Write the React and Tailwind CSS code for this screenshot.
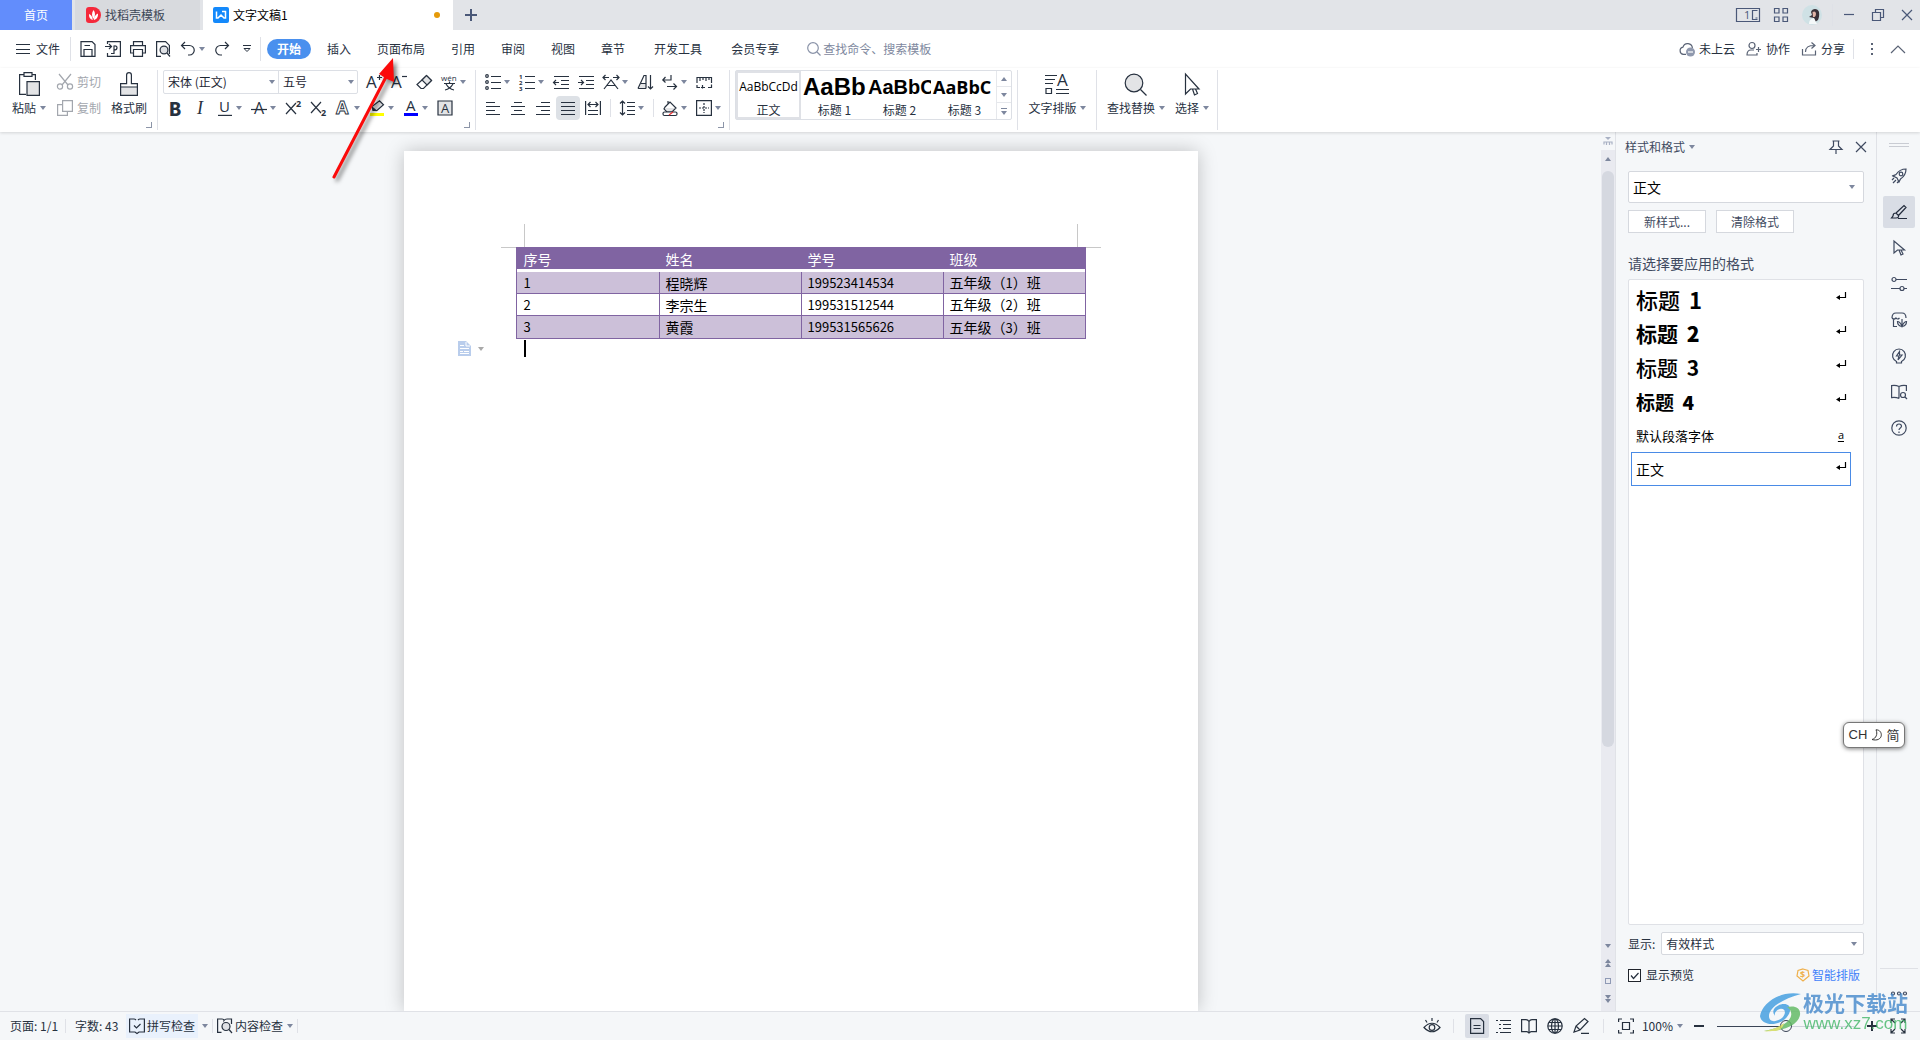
import React, { useState } from 'react';
import clsx from 'clsx';

const students = [
  { id: '1', name: '程晓辉', number: '199523414534', grade: '1' },
  { id: '2', name: '李宗生', number: '199531512544', grade: '2' },
  { id: '3', name: '黄霞', number: '199531565626', grade: '3' },
];

const styleList = [
  { name: '标题', level: '1', className: 'text-[22px] font-medium' },
  { name: '标题', level: '2', className: 'text-[21px] font-bold' },
  { name: '标题', level: '3', className: 'text-[21px] font-medium' },
  { name: '标题', level: '4', className: 'text-[19px] font-bold' },
  { name: '默认段落字体', className: 'text-[13px]', char: true },
  { name: '正文', className: 'text-[14px]', active: true },
];

const gallery = [
  { name: '正文', sample: 'AaBbCcDd', className: "font-['Open_Sans'] text-[12px]", active: true },
  { name: '标题 1', sample: 'AaBb', className: "font-['Liberation_Sans'] text-[24px] font-bold" },
  { name: '标题 2', sample: 'AaBbC', className: "font-['Liberation_Sans'] text-[20px] font-bold" },
  { name: '标题 3', sample: 'AaBbC', className: "font-['Open_Sans'] text-[18px] font-bold" },
];

function Svg({ w = 16, h = 16, children, className, sw = 1.2 }) {
  return (
    <svg width={w} height={h} viewBox={`0 0 ${w} ${h}`} fill="none" stroke="currentColor" strokeWidth={sw} className={clsx('shrink-0 overflow-visible', className)} aria-hidden="true">
      {children}
    </svg>
  );
}

// letter used inside a toolbar icon
function Glyph({ x, y, size, children, bold, fill = 'currentColor' }) {
  return (
    <text x={x} y={y} fontSize={size} fill={fill} stroke="none" fontWeight={bold ? 700 : 400} fontFamily="Open Sans, sans-serif">
      {children}
    </text>
  );
}

function Caret({ className }) {
  return (
    <svg width="6" height="4" viewBox="0 0 6 4" className={clsx('shrink-0 text-[#7d879e]', className)} aria-hidden="true">
      <path d="M0 0h6L3 4z" fill="currentColor" />
    </svg>
  );
}

function Divider({ className }) {
  return <span className={clsx('w-px shrink-0 bg-[#dfe1e7]', className)} />;
}

// toolbar button, optionally with a drop-down arrow
function Tool({ label, children, caret, active }) {
  return (
    <button aria-label={label} className={clsx('flex h-6 shrink-0 items-center gap-[3px]', caret ? 'w-[34px]' : 'w-[25px]')}>
      <span className={clsx('flex h-6 shrink-0 items-center justify-center', active ? '-mx-1 w-6 rounded-sm bg-[#dde1e6]' : 'w-4')}>{children}</span>
      {caret && <Caret />}
    </button>
  );
}

function Corner() {
  return <span className="absolute right-[5px] bottom-1 size-[6px] border-r border-b border-[#8c95a8]" />;
}

function Select({ label, value, className, caretClass = 'right-2' }) {
  return (
    <span className={clsx('relative flex items-center', className)}>
      <select aria-label={label} defaultValue={value} className="h-full w-full appearance-none bg-transparent pl-1 outline-none">
        <option>{value}</option>
      </select>
      <Caret className={clsx('pointer-events-none absolute', caretClass)} />
    </span>
  );
}

function TitleBar() {
  return (
    <header className="flex h-[30px] shrink-0 bg-[#e2e4e8] text-[12px]">
      <button className="w-[72px] bg-[#628dfc] text-white">首页</button>
      <button className="ml-[3px] flex w-[125px] items-center gap-1 bg-[#d8dade] pl-[11px] text-[#3d4757]">
        <svg width="15" height="16" viewBox="0 0 15 16">
          <path d="M0 3Q0 0 3 0h4a8 8 0 0 1 0 16H3q-3 0-3-3z" fill="#f5293b" />
          <path d="M7.500 3c2 2.500 2 5.500 0 9-2-3-2-6 0-9zM3 7c2 .5 3.500 2.500 3.800 6C4 12.500 2.800 10 3 7zm9-.5c.3 3.500-1.500 6-4.200 6.500C8 10 9.500 7.500 12 6.500z" fill="#fff" />
        </svg>
        找稻壳模板
      </button>
      <div className="ml-[3px] flex w-[250px] items-center gap-1 bg-white pr-[13px] pl-[10px] text-black">
        <svg width="16" height="16" viewBox="0 0 16 16">
          <rect width="16" height="16" rx="2" fill="#1489fb" />
          <path d="M3.500 4.500v6.500h1.500L8 8l3 3h1.500V4.500H9" fill="none" stroke="#fff" strokeWidth="1.500" />
        </svg>
        <span className="flex-1">文字文稿1</span>
        <span className="size-[6px] rounded-full bg-[#e59a09]" />
      </div>
      <button aria-label="新建" className="ml-3 text-[#4a5878]">
        <Svg w={12} h={12} sw={2}><path d="M6 0v12M0 6h12" /></Svg>
      </button>
      <div className="ml-auto flex items-center gap-[14px] text-[#4a5878]">
        <button aria-label="窗口">
          <Svg w={24} h={14}>
            <path d="M.5.500h23v13H.5zM21.500 2.500h-5v9h5M19.500 10h2" />
            <Glyph x={8} y={11} size={11}>1</Glyph>
          </Svg>
        </button>
        <button aria-label="应用">
          <Svg w={14} h={14}><path d="M.5.500h4.500v4.500H.5zM9 .500h4.500v4.500H9zM.5 9h4.500v4.500H.5zM9 9h4.500v4.500H9z" /></Svg>
        </button>
        <svg width="20" height="20" viewBox="0 0 20 20" aria-hidden="true">
          <circle cx="10" cy="10" r="10" fill="#cfe1e5" />
          <path d="M9 7c1-4 7-4 8 0 .5 3 0 6-1 8l-3 2-1-4-5-1 3-2z" fill="#3a3138" />
          <path d="M10.500 7q3-1.500 3.500 1.500c0 3-1.500 4-3 3.500z" fill="#e3b5a8" />
          <path d="M7 19c0-4 2-5 5-6l3 6z" fill="#f4f8f9" />
        </svg>
      </div>
      <Divider className="mx-[10px] my-1 bg-[#c9ccd3]" />
      <div className="flex items-center gap-[17px] pr-[7px] text-[#4a5878]">
        <button aria-label="最小化"><Svg w={12} h={12}><path d="M1 5.500h10" /></Svg></button>
        <button aria-label="还原"><Svg w={12} h={12}><path d="M.5 3.500h8v8h-8zM3.500 3V.500h8v8H9" /></Svg></button>
        <button aria-label="关闭"><Svg w={12} h={12}><path d="m1 1 10 10M11 1 1 11" /></Svg></button>
      </div>
    </header>
  );
}

function MenuBar() {
  return (
    <div className="flex h-[38px] shrink-0 items-center bg-white text-[12px] text-[#27313f]">
      <button className="ml-4 flex items-center gap-[6px]">
        <Svg w={14} h={12} sw={1}><path d="M0 1.500h14M0 6.500h14M0 10.500h14" /></Svg>
        文件
      </button>
      <Divider className="mr-[9px] ml-[10px] h-6" />
      <Tool label="保存"><Svg><path d="M1 .6h11l3 3v11.800H1zM4 15V8.500h8V15M4.500 4.500H10" /></Svg></Tool>
      <Tool label="输出为PDF"><Svg><path d="M2.500 3V.6h12.900v14.800H2.500V12M0 5.500h6M4 3l2.500 2.500L4 8M6 12.500h3V5c4-1 4 4 0 4" /></Svg></Tool>
      <Tool label="打印"><Svg><path d="M3.500 4V.6h9V4M3.500 12H.6V4.600h14.800V12h-2.900M3.500 8.500h9v6.900h-9z" /></Svg></Tool>
      <Tool label="打印预览"><Svg><path d="M6 15.400H1.600V.6h9l3.800 3.800V13" /><circle cx="9" cy="9" r="3.900" fill="#dfe1e5" /><path d="m12 12 3 3.500" /></Svg></Tool>
      <Tool label="撤销" caret><Svg><path d="M5 1 1.500 4.500 5 8M2 4.500h7.500a4.500 4.500 0 0 1 0 9.500H8" /></Svg></Tool>
      <Tool label="恢复"><Svg><path d="m11 1 3.500 3.500L11 8M14 4.500H6.500a4.500 4.500 0 0 0 0 9.500H8" /></Svg></Tool>
      <button aria-label="自定义" className="flex w-4 justify-center"><Svg w={8} h={8} sw={1}><path d="M0 .5h8M1 3.500h6L4 6.500z" /></Svg></button>
      <Divider className="mr-[6px] ml-[5px] h-6" />
      <button className="h-5 w-11 rounded-full bg-[#4a90ee] font-bold text-white">开始</button>
      <nav className="ml-4 flex gap-[26px]">
        {['插入', '页面布局', '引用', '审阅', '视图', '章节'].map(item => <button key={item}>{item}</button>)}
      </nav>
      <nav className="ml-[29px] flex gap-[29px]">
        {['开发工具', '会员专享'].map(item => <button key={item}>{item}</button>)}
      </nav>
      <label className="ml-7 flex items-center gap-[2px] text-[#8a93a8]">
        <Svg w={14} h={14}><circle cx="6" cy="6" r="5.300" /><path d="m10 10 3.500 3.500" /></Svg>
        <input aria-label="搜索" placeholder="查找命令、搜索模板" className="w-[120px] outline-none placeholder:text-[#7e889e]" />
      </label>
      <div className="ml-auto flex items-center gap-[11px]">
        <button className="flex items-center gap-1">
          <Svg className="text-[#5a6375]"><path d="M7 13.400H4.500a3.700 3.700 0 0 1-.5-7.300 4.800 4.800 0 0 1 9.400 1" /><circle cx="11.500" cy="11" r="4.500" fill="#9099ae" stroke="none" /><path d="M9 11h5" stroke="#fff" /></Svg>
          未上云
        </button>
        <button className="flex items-center gap-1">
          <Svg className="text-[#5a6375]"><circle cx="6" cy="4.500" r="3" /><path d="M8 9H5Q1 9 1 14h10v-2M10 8.500h5M12.500 6v5" /></Svg>
          协作
        </button>
        <button className="flex items-center gap-1">
          <Svg className="text-[#5a6375]"><path d="M1.500 8v6h13V9.500M4.500 11c0-5 3-6.500 9-6.500M10.500 1.500l3.500 3-3.500 3" /></Svg>
          分享
        </button>
      </div>
      <Divider className="mx-2 h-5" />
      <button aria-label="更多" className="mx-2 text-[#5a6375]"><Svg w={4} h={14}><path d="M1 2h2M1 7h2M1 12h2" strokeWidth="2" /></Svg></button>
      <button aria-label="收起" className="mr-[14px] ml-2 text-[#5a6375]"><Svg w={16} h={10}><path d="m1 9 7-7 7 7" /></Svg></button>
    </div>
  );
}

function Ribbon() {
  return (
    <div className="relative z-10 flex h-16 shrink-0 bg-white text-[12px] text-[#27313f] shadow-[0_1px_3px_rgba(0,0,0,0.14)]">
      <section className="relative flex w-[157px]">
        <button className="mt-1 ml-3 flex flex-col items-center gap-[3px]">
          <Svg w={22} h={24}>
            <path d="M6 2.600H1.600v19.800H8M14 2.600h3.400V8" /><path d="M6 .6h8v3.800H6z" /><path d="M9 9.600h12.400v13.800H9z" fill="#e3e4e6" />
          </Svg>
          <span className="flex items-center gap-1 leading-[18px]">粘贴<Caret /></span>
        </button>
        <div className="mt-px ml-[11px] flex flex-col text-[#a3a7ae]">
          <button className="flex h-[26px] items-center gap-1">
            <Svg><path d="m2 0 9 11M14 0 5 11" /><circle cx="3" cy="12.500" r="2.600" /><circle cx="13" cy="12.500" r="2.600" /></Svg>剪切
          </button>
          <button className="flex h-[26px] items-center gap-1">
            <Svg><path d="M5.600.6h9.800v10.800H5.600zM5 4.600H.6v10.800h9.800V12" /></Svg>复制
          </button>
        </div>
        <button className="mt-1 ml-[10px] flex flex-col items-center gap-[3px]">
          <Svg w={20} h={24}>
            <path d="M1.600 15h16.800v8.400H1.600z" fill="#e3e4e6" /><path d="M1.600 15v-3.400H7.600V3q0-2.400 2.400-2.400T12.400 3v8.600h6V15" />
          </Svg>
          <span className="leading-[18px]">格式刷</span>
        </button>
        <Corner />
      </section>
      <Divider className="my-[2px]" />

      <section className="relative w-[317px] pt-px pl-[5px]">
        <div className="flex h-[26px] items-center">
          <div className="mr-2 flex h-6 rounded-xs border border-[#dcdfe5] text-[#1d2633]">
            <Select label="字体" value="宋体 (正文)" className="w-[115px] border-r border-[#dcdfe5]" caretClass="right-[3px]" />
            <Select label="字号" value="五号" className="w-[78px]" caretClass="right-[3px]" />
          </div>
          <Tool label="增大字号"><Svg><path d="M11 3.500h5M13.500 1v5" /><Glyph x={0} y={14} size={17}>A</Glyph></Svg></Tool>
          <Tool label="减小字号"><Svg><path d="M11 2.500h5" /><Glyph x={0} y={14} size={17}>A</Glyph></Svg></Tool>
          <Tool label="清除格式"><Svg><path d="m6 6 4.500-4.500 5 5-8 8H5l-4-4z" /><path d="m6 6 4.500-4.500 5 5L11 11z" fill="#e3e4e6" /></Svg></Tool>
          <Tool label="拼音指南" caret>
            <Svg><Glyph x={0} y={7} size={8}>wén</Glyph><path d="M3 9.500h11M8.500 7.500v2M5 10q3 5 8 6M12 10q-3 5-8 6" /></Svg>
          </Tool>
        </div>
        <div className="flex h-[26px] items-center pl-1">
          <Tool label="加粗"><b className="text-[18px] leading-none font-black">B</b></Tool>
          <Tool label="倾斜"><i className="font-['Liberation_Serif'] text-[18px] leading-none">I</i></Tool>
          <Tool label="下划线" caret><Svg><Glyph x={2} y={12} size={15}>U</Glyph><path d="M1 15.400h14" /></Svg></Tool>
          <Tool label="删除线" caret><Svg><Glyph x={3} y={14} size={16}>A</Glyph><path d="M0 9.500h16" /></Svg></Tool>
          <Tool label="上标"><Svg><path d="m1 3 10 11M11 3 1 14" /><Glyph x={11} y={7} size={9} bold>2</Glyph></Svg></Tool>
          <Tool label="下标"><Svg><path d="m1 2 10 11M11 2 1 13" /><Glyph x={11} y={16} size={9} bold>2</Glyph></Svg></Tool>
          <Tool label="文字效果" caret>
            <Svg><text x="1" y="14" fontSize="18" fontWeight="700" fontFamily="Open Sans" fill="#fff" stroke="#27313f" strokeWidth="0.900">A</text></Svg>
          </Tool>
          <Tool label="突出显示" caret>
            <Svg><path d="M1 13h14v3H1z" fill="#ff0" stroke="none" /><path d="M4 10.500 3 6.500 10.500.8l4 4L8 10.500zM3.500 7.500l4 3.500" fill="#e3e4e6" /></Svg>
          </Tool>
          <Tool label="字体颜色" caret>
            <Svg><path d="M1 13h14v3H1z" fill="#00f" stroke="none" /><Glyph x={3} y={11} size={15}>A</Glyph></Svg>
          </Tool>
          <Tool label="字符底纹"><Svg><path d="M1 1h14v14H1z" fill="#e3e4e6" /><Glyph x={4} y={13} size={13}>A</Glyph></Svg></Tool>
        </div>
        <Corner />
      </section>
      <Divider className="my-[2px]" />

      <section className="relative w-[253px] pt-px pl-[9px]">
        <div className="flex h-[26px] items-center">
          <Tool label="项目符号" caret><Svg><circle cx="2" cy="2" r="1.300" /><circle cx="2" cy="8" r="1.300" /><circle cx="2" cy="14" r="1.300" /><path d="M6 2.500h10M6 8.500h10M6 14.500h10" /></Svg></Tool>
          <Tool label="编号" caret>
            <Svg><Glyph x={0} y={5} size={6} bold>1</Glyph><Glyph x={0} y={11} size={6} bold>2</Glyph><Glyph x={0} y={17} size={6} bold>3</Glyph><path d="M6 2.500h10M6 8.500h10M6 14.500h10" /></Svg>
          </Tool>
          <Tool label="减少缩进"><Svg><path d="M1 2.500h15M8 6.500h8M8 10.500h8M1 14.500h15M6 8.500H.5M3 6 .5 8.500 3 11" /></Svg></Tool>
          <Tool label="增加缩进"><Svg><path d="M1 2.500h15M8 6.500h8M8 10.500h8M1 14.500h15M0 8.500h5.500M3 6l2.500 2.500L3 11" /></Svg></Tool>
          <Tool label="中文版式" caret><Svg><path d="m1 15 7-9 7 9M4 11.500h8M0 3.500h6M2.500 1 0 3.500 2.500 6M16 3.500h-6M13.500 1 16 3.500 13.500 6" /></Svg></Tool>
          <Tool label="排序"><Svg><path d="M4 10h5v4H2.500z" fill="#e3e4e6" stroke="none" /><path d="M1 14.500 7 1.500h2v13M4 9.500h5M1 14.500h8M13.500 1v14M11 12.500l2.500 2.500 2.500-2.500" /></Svg></Tool>
          <Tool label="显示段落标记" caret><Svg><path d="M9 1v5H.8M3.500 3 .8 6l2.700 2.500M5 12.500h9M11.500 9.500l3 3-3 3" /></Svg></Tool>
          <Tool label="制表位"><Svg><path d="M1 9V3.500h14.500V9M4 3.500V7M7 3.500V6M10 3.500V7M13 3.500V6M1 13.500h3M1 11v3M6.500 11v3.500M5 13.500h4M12 13.500h3.500v-3" /></Svg></Tool>
        </div>
        <div className="flex h-[26px] items-center">
          <Tool label="左对齐"><Svg><path d="M1 2.500h9M1 6.500h14M1 10.500h9M1 14.500h14" /></Svg></Tool>
          <Tool label="居中"><Svg><path d="M4 2.500h8M1 6.500h14M4 10.500h8M1 14.500h14" /></Svg></Tool>
          <Tool label="右对齐"><Svg><path d="M6 2.500h9M1 6.500h14M6 10.500h9M1 14.500h14" /></Svg></Tool>
          <Tool label="两端对齐" active><Svg><path d="M1 2.500h14M1 6.500h14M1 10.500h14M1 14.500h14" /></Svg></Tool>
          <Tool label="分散对齐"><Svg><path d="M.6 1v14M15.400 1v14M3 10.500h10M3 14.500h10M3 4.500h10M5.500 2 3 4.500 5.500 7M10.500 2 13 4.500 10.500 7" /></Svg></Tool>
          <Divider className="mr-2 h-[18px]" />
          <Tool label="行距" caret><Svg><path d="M3.500 1v14M1 3.500 3.500 1 6 3.500M1 12.500 3.500 15 6 12.500M8 2.500h8M8 6.500h8M8 10.500h8M8 14.500h8" /></Svg></Tool>
          <Divider className="mr-2 h-[18px]" />
          <Tool label="底纹颜色" caret>
            <Svg><path d="M3 8h11l-4 4H6z" fill="#e3e4e6" stroke="none" /><path d="m3 7 5-5 6 6-4 4H5L2 9zM6 4V1" /><rect x="1" y="12" width="14" height="3.500" rx="1.500" fill="#fff" /><path d="m7 15 4-3" stroke="#e33" /></Svg>
          </Tool>
          <Tool label="边框" caret><Svg><path d="M.6.600h14.800v14.800H.6z" /><path d="M8 3v10M3 8h10" strokeDasharray="2 1" /></Svg></Tool>
        </div>
        <Corner />
      </section>
      <Divider className="my-[2px]" />

      <section className="px-[5px] pt-[2px]">
        <div className="flex h-[50px] rounded-xs border border-[#dcdfe5]">
          {gallery.map(style => (
            <button key={style.name} className={clsx('flex w-[65px] flex-col items-center overflow-hidden', style.active ? 'ring-2 ring-[#dfe1e6] ring-inset' : 'pl-[2px]')}>
              <span className={clsx('flex h-[31px] items-center leading-none text-black', style.active ? 'justify-center' : 'w-full', style.className)}>{style.sample}</span>
              <span className="leading-4">{style.name}</span>
            </button>
          ))}
          <div className="flex w-[15px] flex-col border-l border-[#e6e8ec]">
            <button aria-label="上一行" className="flex h-4 items-center justify-center border-b border-[#e6e8ec]"><Caret className="rotate-180" /></button>
            <button aria-label="下一行" className="flex h-4 items-center justify-center border-b border-[#e6e8ec]"><Caret /></button>
            <button aria-label="更多样式" className="flex h-4 flex-col items-center justify-center gap-[2px]"><span className="h-px w-[6px] bg-[#7d879e]" /><Caret /></button>
          </div>
        </div>
      </section>
      <Divider className="my-[2px]" />
      <button className="mt-1 flex w-[78px] flex-col items-center gap-[3px]">
        <Svg w={24} h={24}><path d="M0 3.500h12M0 7.500h10M0 11.500h8M1 16.500h5.500v5H1zM11 17.500h13M11 21.500h13" /><Glyph x={12} y={14} size={17}>A</Glyph></Svg>
        <span className="flex items-center gap-[3px] leading-[18px]">文字排版<Caret /></span>
      </button>
      <Divider className="my-[2px]" />
      <button className="mt-1 ml-[10px] flex flex-col items-center gap-[3px]">
        <Svg w={24} h={24}><circle cx="10" cy="11" r="8.800" fill="#e3e4e6" /><path d="m16.500 17.500 6 6" /></Svg>
        <span className="flex items-center gap-1 leading-[18px]">查找替换<Caret /></span>
      </button>
      <button className="mt-1 ml-[10px] flex flex-col items-center gap-[3px]">
        <Svg w={16} h={24}><path d="M1.500 2v20l5-5h8.500zM8.500 17l2 6 3-1.500-2-4.500" /></Svg>
        <span className="flex items-center gap-1 leading-[18px]">选择<Caret /></span>
      </button>
      <Divider className="my-[2px] ml-2" />
    </div>
  );
}

function Document() {
  return (
    <main className="min-w-0 flex-1 overflow-hidden bg-[#f5f7f9] pt-[19px]">
      <article className="mx-auto h-full w-[794px] bg-white pt-[73px] text-[14px] text-black shadow-[0_0_18px_rgba(0,0,0,0.22)]">
        <div className="mx-[97px] -mb-px flex h-6 justify-between">
          <span className="w-6 border-r border-b border-[#c8c8c8]" />
          <span className="w-6 border-b border-l border-[#c8c8c8]" />
        </div>
        <div className="relative mx-[112px]">
          <table className="w-full table-fixed border-separate border-spacing-0 border border-[#8064a2] text-left leading-[18px]">
            <thead>
              <tr>
                {['序号', '姓名', '学号', '班级'].map(title => (
                  <th key={title} className="h-6 border-b-[3px] border-white bg-[#8064a2] p-0 pl-[7px] font-normal text-white">{title}</th>
                ))}
              </tr>
            </thead>
            <tbody className="[&_td]:h-[22px] [&_td]:border-[#8064a2] [&_td]:p-0 [&_td]:pl-[7px] [&_td+td]:border-l [&_td+td]:pl-[6px] [&_tr:not(:last-child)_td]:border-b [&_tr:nth-child(odd)]:bg-[#ccc0d9]">
              {students.map(student => (
                <tr key={student.id}>
                  <td className="text-[13px]">{student.id}</td>
                  <td>{student.name}</td>
                  <td className="text-[13px]">{student.number}</td>
                  <td>五年级（<span className="text-[13px]">{student.grade}</span>）班</td>
                </tr>
              ))}
            </tbody>
          </table>
        </div>
        <div className="mt-px ml-[54px] flex items-center">
          <svg width="13" height="15" viewBox="0 0 13 15" aria-hidden="true">
            <path d="M0 0h8l5 5v10H0z" fill="#b9cdec" />
            <path d="M2 4.500h4M2 7.500h9M2 10.500h3M6 10.500h5M2 12.500h9M8 1v4h4" stroke="#fff" fill="none" />
          </svg>
          <Caret className="ml-[7px] text-[#a9a9a9]" />
          <span className="ml-10 h-[17px] w-[2px] bg-black" />
        </div>
      </article>
    </main>
  );
}

function ScrollStrip() {
  return (
    <div className="flex w-[14px] shrink-0 flex-col items-center bg-[#e9eaf0] text-[#8f9ab5]">
      <div className="flex h-[18px] w-full items-center justify-center bg-[#f5f7f9]">
        <Svg w={8} h={8} className="text-[#a9b1c4]"><path d="M1 0h6L4 3z" fill="currentColor" stroke="none" /><path d="M0 7.500V5h8v2.500M2.500 5v3M5.500 5v3" /></Svg>
      </div>
      <Caret className="mt-[7px] rotate-180" />
      <div className="mt-[10px] w-3 flex-[575] rounded-full bg-[#d5d8e0]" />
      <div className="flex-[197]" />
      <div className="flex flex-col items-center gap-[11px] pb-2">
        <Caret />
        <span className="flex flex-col"><Caret className="rotate-180" /><Caret className="rotate-180" /></span>
        <span className="size-[6px] border border-[#8f9ab5]" />
        <span className="flex flex-col"><Caret /><Caret /></span>
      </div>
    </div>
  );
}

function StylePanel() {
  const [preview, setPreview] = useState(true);

  return (
    <aside className="flex w-[262px] shrink-0 flex-col border-x border-[#e0e2e7] bg-[#f5f7f9] pb-[25px] text-[12px] text-[#3f4a60]">
      <div className="flex h-[30px] items-center px-[9px]">
        <button className="flex items-center gap-1">样式和格式<Caret /></button>
        <button aria-label="固定" className="mr-3 ml-auto"><Svg w={14} h={14}><path d="M3.500 1h7M4.500 1v5L1 9.500h12L9.500 6V1M7 9.500V14" /></Svg></button>
        <button aria-label="关闭"><Svg w={12} h={12}><path d="m1 1 10 10M11 1 1 11" /></Svg></button>
      </div>
      <div className="flex min-h-0 flex-1 flex-col px-3">
        <Select label="当前样式" value="正文" className="mt-[9px] h-8 shrink-0 rounded-xs border border-[#d5d8de] bg-white text-[14px] text-black" />
        <div className="mt-[7px] flex gap-[10px]">
          <button className="h-[23px] w-[78px] border border-[#d5d8de] bg-white">新样式...</button>
          <button className="h-[23px] w-[78px] border border-[#d5d8de] bg-white">清除格式</button>
        </div>
        <h2 className="mt-5 text-[14px] leading-5">请选择要应用的格式</h2>
        <ul className="mt-[6px] flex-1 rounded-xs border border-[#dfe1e6] bg-white pt-[2px] pr-3 pl-[2px] text-black">
          {styleList.map(style => (
            <li key={style.name + style.level} className={clsx('flex h-[34px] items-center justify-between border px-1', style.active ? 'border-[#4a8be6]' : 'border-transparent')}>
              <span className={clsx('leading-none', style.className)}>
                {style.name}
                {style.level && <b className="ml-1"> {style.level}</b>}
              </span>
              {style.char ? (
                <span className="mr-[2px] font-['Open_Sans'] text-[11px] leading-3 underline underline-offset-2">a</span>
              ) : (
                <Svg w={10} h={14}><path d="M9.500 0v5.500H2" /><path d="M0 5.500 4 3v5z" fill="currentColor" stroke="none" /></Svg>
              )}
            </li>
          ))}
        </ul>
        <div className="mt-[7px] flex items-center gap-[6px] text-[#27313f]">
          <span>显示:</span>
          <Select label="显示" value="有效样式" className="h-[23px] flex-1 rounded-xs border border-[#d5d8de] bg-white" caretClass="right-[6px]" />
        </div>
        <div className="mt-[9px] flex h-[22px] items-center text-[#27313f]">
          <label className="flex items-center gap-[5px]">
            <span className="relative flex">
              <input type="checkbox" checked={preview} onChange={() => setPreview(!preview)} className="size-[13px] appearance-none border border-[#20242c] bg-white" />
              {preview && <Svg w={13} h={13} className="pointer-events-none absolute"><path d="m3 6.500 2.500 3L10.500 4" /></Svg>}
            </span>
            显示预览
          </label>
          <a href="#smart" className="mr-1 ml-auto flex items-center gap-[2px] text-[#417ff9]">
            <Svg w={14} h={14} className="text-[#efb04c]"><path d="M7 1 12 2.500 13 8l-6 5L1 8l1-5.500z" /><Glyph x={4} y={10} size={9} bold>$</Glyph></Svg>
            智能排版
          </a>
        </div>
      </div>
    </aside>
  );
}

function SideBar() {
  return (
    <aside className="flex flex-1 flex-col items-center text-[#3f4a60]">
      <span className="mt-[11px] h-[4px] w-5 border-y border-[#c9ccd3]" />
      <div className="mt-[13px] flex flex-col gap-1 [&_button]:flex [&_button]:size-8 [&_button]:items-center [&_button]:justify-center">
        <button aria-label="快捷"><Svg><path d="M5 6.500C8 2 11 1 15 1c0 4-1 7-5.500 10L8 14l-2-4-4-2zM1 12l2-2M2 15l3-3M6 15l1.500-1.500M5 6.500 1 8" /><circle cx="10" cy="6" r="1.800" /></Svg></button>
        <button aria-label="样式" className="rounded-xs bg-[#d9dde5] text-[#222b3c]"><Svg><path d="M5 9 13 1.500l2 2L7.500 11.500M5 9q-3 0-3 3l-1.500 2H5q3 0 2.500-2.500zM7 14.500h9" /></Svg></button>
        <button aria-label="选择"><Svg><path d="M3 1v12l3.500-3h7zM8 10l2 5 2-1-2-4" /></Svg></button>
        <button aria-label="属性"><Svg><circle cx="3" cy="3.500" r="2" /><path d="M5 3.500h11M0 12.500h9M13 12.500h3" /><circle cx="11" cy="12.500" r="2" /></Svg></button>
        <button aria-label="素材"><Svg><path d="M6 14.500H2.500V7M1 6q0-5 4-5h6q4 0 4 5M1 6q2 2 4 0 1.500 2 3.500 0M11 14.500C8 14 6.500 12 6.500 9.500q2.500 0 4.500 5zm0 0c3-.5 4.500-2.500 4.500-5q-2.500 0-4.500 5zm0 0V7" /></Svg></button>
        <button aria-label="推荐"><Svg><path d="M5.500 13.500a6.500 6.500 0 1 1 5 0V15h-5zM8.500 3.500 5.500 8H8l-1 4 4-5H8.500z" /></Svg></button>
        <button aria-label="查找"><Svg><path d="M8 2.500Q5 1 .6 1.600v12Q5 13 8 14.500M8 2.500Q11 1 15.400 1.600V7M8 2.500v12" /><circle cx="12" cy="11" r="2.500" /><path d="m14 13 2 2" /></Svg></button>
        <button aria-label="帮助"><Svg><circle cx="8" cy="8" r="7.200" /><path d="M5.500 6.500Q5.500 4 8 4t2.500 2.300C10.500 8 8 8 8 10M8 11.500V13" /></Svg></button>
      </div>
      <span className="mt-auto h-px w-[38px] bg-[#dfe1e6]" />
      <button aria-label="更多" className="mt-[22px] mb-[15px]"><Svg w={16} h={5}><circle cx="2" cy="2.500" r="1.500" /><circle cx="8" cy="2.500" r="1.500" /><circle cx="14" cy="2.500" r="1.500" /></Svg></button>
    </aside>
  );
}

function StatusBar() {
  const [zoom, setZoom] = useState(50);

  return (
    <footer className="flex h-[29px] shrink-0 items-center border-t border-[#e0e2e7] bg-[#f5f7f9] text-[12px] text-[#27313f] [&_button]:flex [&_button]:items-center">
      <span className="w-[65px] pl-[10px]">页面: 1/1</span>
      <Divider className="h-[14px]" />
      <span className="w-[60px] pl-[9px]">字数: 43</span>
      <button className="h-6 gap-[2px] bg-[#e9f1fc] px-[3px]">
        <Svg><path d="M7 2q-1-1-2-1H.6v13H6l2 1.500L10 14h5.400V1H11q-1 0-2 1M5 7.500 7.500 10l4-4" /></Svg>
        拼写检查
      </button>
      <Caret className="mx-1" />
      <Divider className="mr-1 h-[14px]" />
      <button className="gap-[2px]">
        <Svg><path d="M4.500 14.400H.6V1H5q2 0 2 1.500Q8 1 10 1h4.500v5" /><circle cx="9" cy="8.500" r="4" fill="#dfe1e5" /><path d="m12 11.500 3 3.500" /></Svg>
        内容检查
      </button>
      <Caret className="mx-1" />
      <Divider className="mr-1 h-[14px]" />

      <button aria-label="护眼模式" className="ml-auto w-6 justify-center"><Svg><path d="M0 9.500Q8 1 16 9.500 8 18 0 9.500zM8 3V0M3 4.500 1.500 2M13 4.500 14.500 2" /><circle cx="8" cy="9.500" r="2.800" /></Svg></button>
      <Divider className="mr-[11px] ml-[9px] h-[14px]" />
      <div className="flex gap-[2px] [&_button]:size-6 [&_button]:justify-center">
        <button aria-label="页面视图" className="rounded-xs bg-[#d9dde5]"><Svg><path d="M1.600.6h10l3 3v11.800h-13zM4.500 7.500h7M4.500 10.500h7" /></Svg></button>
        <button aria-label="大纲视图"><Svg><path d="M1 2.500h2M5 2.500h11M4 6.500h2M8 6.500h8M4 10.500h2M8 10.500h8M1 14.500h2M5 14.500h11" /></Svg></button>
        <button aria-label="阅读版式"><Svg><path d="M8 3.500Q7 1.600 5 1.600H.6v12H6L8 15l2-1.400h5.400v-12H11Q9 1.600 8 3.500zM8 3.500V15" /></Svg></button>
        <button aria-label="Web版式"><Svg><circle cx="8" cy="8" r="7.200" /><ellipse cx="8" cy="8" rx="3.500" ry="7.200" /><path d="M1 8h14M2 4.500h12M2 11.500h12M8 1v14" /></Svg></button>
        <button aria-label="写作模式"><Svg><path d="m1 14 2-6 8.500-7.500 3.500 3L7 12zM3 8l4 4M8 15.400h8" /></Svg></button>
      </div>
      <Divider className="mr-[14px] ml-[10px] h-[14px]" />
      <button aria-label="最佳显示比例"><Svg><path d="M.6 4V1H4M12 1h3.400v3M15.400 12v3H12M4 15H.6v-3M4.500 4.500h7v7h-7z" /></Svg></button>
      <button className="ml-2 gap-1">100%<Caret /></button>
      <button aria-label="缩小" className="mr-3 ml-[10px]"><Svg w={12} h={12} sw={2}><path d="M1 6h10" /></Svg></button>
      <input
        type="range"
        aria-label="显示比例"
        value={zoom}
        onChange={e => setZoom(e.target.value)}
        className="h-3 w-[137px] appearance-none bg-[linear-gradient(90deg,#3a4456_50%,#cfd3dc_50%)] bg-[length:100%_1px] bg-center bg-no-repeat [&::-webkit-slider-thumb]:size-3 [&::-webkit-slider-thumb]:appearance-none [&::-webkit-slider-thumb]:rounded-full [&::-webkit-slider-thumb]:border [&::-webkit-slider-thumb]:border-[#3a4456] [&::-webkit-slider-thumb]:bg-[#f5f7f9]"
      />
      <button aria-label="放大" className="mx-3"><Svg w={12} h={12} sw={2}><path d="M1 6h10M6 1v10" /></Svg></button>
      <button aria-label="全屏" className="mr-[14px]"><Svg><path d="M1 5V1h4M1 1l4 4M11 1h4v4M15 1l-4 4M15 11v4h-4M15 15l-4-4M5 15H1v-4M1 15l4-4" /></Svg></button>
    </footer>
  );
}

// red pointer towards the page layout tab
function Pointer() {
  return (
    <svg width="76" height="132" viewBox="0 0 76 132" className="pointer-events-none absolute top-[54px] left-[328px] z-20 drop-shadow-[3px_3px_2px_rgba(0,0,0,0.5)]" aria-hidden="true">
      <path d="m6 123 53-102" stroke="#fb0a0a" strokeWidth="3" strokeLinecap="round" />
      <path d="m65 4 1 24-7-3-8-5z" fill="#fb0a0a" />
    </svg>
  );
}

function Watermark() {
  return (
    <div className="pointer-events-none absolute right-3 bottom-[6px] z-20 flex items-end opacity-80">
      <svg width="44" height="42" viewBox="0 0 44 42" aria-hidden="true">
        <path d="M42 2C24 7 10 15 10 24c0 7 8 6 13 2 5-5 3-10-2-9-4 1-6 4-5 7-5-6 2-12 9-12 8 0 8 9 1 15C17 35 2 33 1 24 3 12 20-2 42 2z" fill="#3d9be0" />
        <path d="M28 15c8-2 14 1 13 8-2 11-19 17-36 16 15-3 25-8 27-15 1-4-1-7-4-9z" fill="#5cb85f" />
        <path d="M5 39c8-1 15-4 20-8-1 5-4 8-10 8-4 0-8 1-10 0z" fill="#d3da55" />
      </svg>
      <div className="flex flex-col items-center">
        <span className="text-[21px] leading-6 font-bold text-[#4488cc]">极光下载站</span>
        <span className="font-['Liberation_Sans'] text-[17px] leading-5 font-medium text-[#43b768]">www.xz7.com</span>
      </div>
    </div>
  );
}

function App() {
  return (
    <div className="relative flex h-screen flex-col overflow-hidden bg-[#f5f7f9] font-['Noto_Sans_CJK_SC',sans-serif]">
      <TitleBar />
      <MenuBar />
      <Ribbon />
      <div className="flex min-h-0 flex-1">
        <Document />
        <ScrollStrip />
        <StylePanel />
        <div className="flex w-[43px] shrink-0">
          <SideBar />
        </div>
      </div>
      <StatusBar />
      <Pointer />
      <div className="absolute top-[722px] right-[15px] z-20 flex h-[26px] w-[62px] items-center justify-center gap-1 rounded-md border border-[#777] bg-white text-[13px] text-[#333] shadow-[0_1px_4px_rgba(0,0,0,0.5)]">
        <span className="font-['Liberation_Sans']">CH</span>
        <Svg w={11} h={12} sw={1}><path d="M5 .8c4 0 5.500 3 5.300 5.500C10 10 6 12 1 10.500 5 9.500 7 5 5 .8z" /></Svg>
        <span>简</span>
      </div>
      <Watermark />
    </div>
  );
}

export default App;
